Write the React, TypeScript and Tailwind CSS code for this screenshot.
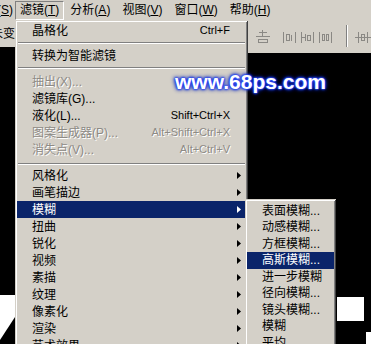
import { Fragment } from 'react';

type Entry =
  | { sep: string }
  | { label: string; shortcut?: string; sub?: boolean; disabled?: boolean; active?: boolean };

const mainItems: Entry[] = [
  { label: '晶格化', shortcut: 'Ctrl+F' },
  { sep: 'h-[8px] pt-[3px]' },
  { label: '转换为智能滤镜' },
  { sep: 'h-[9px] pt-[3px]' },
  { label: '抽出(X)...', disabled: true },
  { label: '滤镜库(G)...' },
  { label: '液化(L)...', shortcut: 'Shift+Ctrl+X' },
  { label: '图案生成器(P)...', shortcut: 'Alt+Shift+Ctrl+X', disabled: true },
  { label: '消失点(V)...', shortcut: 'Alt+Ctrl+V', disabled: true },
  { sep: 'h-[9px] pt-[5px]' },
  { label: '风格化', sub: true },
  { label: '画笔描边', sub: true },
  { label: '模糊', sub: true, active: true },
  { label: '扭曲', sub: true },
  { label: '锐化', sub: true },
  { label: '视频', sub: true },
  { label: '素描', sub: true },
  { label: '纹理', sub: true },
  { label: '像素化', sub: true },
  { label: '渲染', sub: true },
  { label: '艺术效果', sub: true },
];

const blurItems = [
  { label: '表面模糊...' },
  { label: '动感模糊...' },
  { label: '方框模糊...' },
  { label: '高斯模糊...', active: true },
  { label: '进一步模糊' },
  { label: '径向模糊...' },
  { label: '镜头模糊...' },
  { label: '模糊' },
  { label: '平均' },
];

const menuFrame =
  'bg-[#d4d0c8] p-[2px] shadow-[inset_1px_1px_0_#d4d0c8,inset_-1px_-1px_0_#404040,inset_2px_2px_0_#ffffff,inset_-2px_-2px_0_#808080]';

const disabledText = 'text-[#8d8a85] [text-shadow:1px_1px_0_#ffffff]';

function Arrow({ white }: { white?: boolean }) {
  return (
    <svg width="4" height="7" viewBox="0 0 4 7">
      <polygon points="0,0 4,3.5 0,7" fill={white ? '#ffffff' : '#000000'} />
    </svg>
  );
}

function MenuBarItem({ name, u }: { name: string; u: string }) {
  return (
    <div className="px-[6px] whitespace-nowrap">
      {name}(<span className="underline">{u}</span>)
    </div>
  );
}

function MainMenu() {
  return (
    <div className={`absolute left-[15px] top-[20px] w-[233px] h-[340px] ${menuFrame}`}>
      {mainItems.map((it, i) => {
        if ('sep' in it) {
          return (
            <div key={i} className={it.sep}>
              <div className="mx-[1px] border-t border-t-[#808080] border-b border-b-white" />
            </div>
          );
        }
        return (
          <div
            key={i}
            className={`flex items-center h-[17px] pl-[15px] pr-[4px] whitespace-nowrap ${
              it.active ? 'bg-[#0a246a] text-white' : it.disabled ? disabledText : 'text-black'
            }`}
          >
            <span className="text-[12px]">{it.label}</span>
            <span className="flex-1" />
            {it.shortcut && <span className="text-[11px] mr-[7px]">{it.shortcut}</span>}
            <span className="w-[5px] flex items-center">{it.sub && <Arrow white={it.active} />}</span>
          </div>
        );
      })}
    </div>
  );
}

function BlurMenu() {
  return (
    <div className={`absolute left-[245px] top-[199px] w-[91px] h-[160px] pt-[3.5px] ${menuFrame}`}>
      {blurItems.map((it) => (
        <div
          key={it.label}
          className={`flex items-center h-[16.5px] pl-[15px] text-[12px] whitespace-nowrap ${
            it.active ? 'bg-[#0a246a] text-white' : 'text-black'
          }`}
        >
          {it.label}
        </div>
      ))}
    </div>
  );
}

function ToolIcons() {
  const c = '#8a8884';
  return (
    <svg width="123" height="33" viewBox="0 0 123 33" shapeRendering="crispEdges">
      {/* align icon, mostly under the menu edge */}
      <line x1="11" y1="12.5" x2="19" y2="12.5" stroke={c} />
      <line x1="8" y1="16.5" x2="22" y2="16.5" stroke={c} />
      <rect x="10.5" y="19.5" width="9" height="3" fill="none" stroke={c} />
      <line x1="14.5" y1="10" x2="14.5" y2="16" stroke={c} />
      {/* distribute icons */}
      {[35, 53, 71].map((x, k) => (
        <Fragment key={x}>
          <line x1={x + 0.5} y1="12" x2={x + 0.5} y2="23" stroke={c} />
          <line x1={x + 12.5} y1="12" x2={x + 12.5} y2="23" stroke={c} />
          {k === 0 ? (
            <>
              <rect x={x + 3.5} y="14.5" width="3" height="6" fill="none" stroke={c} />
              <line x1={x + 8.5} y1="15" x2={x + 8.5} y2="21" stroke={c} />
            </>
          ) : k === 1 ? (
            <>
              <line x1={x + 4.5} y1="14" x2={x + 4.5} y2="21" stroke={c} />
              <rect x={x + 6.5} y="15.5" width="3" height="5" fill="none" stroke={c} />
              <line x1={x} y1="17.5" x2={x + 4} y2="17.5" stroke={c} />
            </>
          ) : (
            <>
              <rect x={x + 3.5} y="14.5" width="2" height="6" fill="none" stroke={c} />
              <rect x={x + 7.5} y="14.5" width="2" height="6" fill="none" stroke={c} />
            </>
          )}
        </Fragment>
      ))}
      {/* separator */}
      <line x1="98.5" y1="5" x2="98.5" y2="27" stroke="#808080" />
      <line x1="99.5" y1="5" x2="99.5" y2="27" stroke="#ffffff" />
      {/* partial icon */}
      <line x1="110.5" y1="12" x2="110.5" y2="23" stroke={c} />
      <rect x="113.5" y="14.5" width="3" height="6" fill="none" stroke={c} />
      <line x1="119.5" y1="12" x2="119.5" y2="23" stroke={c} />
      <line x1="107" y1="17.5" x2="123" y2="17.5" stroke={c} />
    </svg>
  );
}

export default function App() {
  return (
    <div className="relative w-[371px] h-[344px] overflow-hidden bg-black flex flex-col font-['Liberation_Sans','Noto_Sans_CJK_SC',sans-serif]">
      {/* 菜单栏 */}
      <div className="h-[20px] bg-[#d4d0c8] flex items-center text-[12px] text-black">
        <div className="w-[13px] overflow-hidden flex justify-end whitespace-nowrap">
          (<span className="underline">S</span>)
        </div>
        <div className="ml-[2px] h-[19px] flex items-center px-[4px] border border-t-[#808080] border-l-[#808080] border-b-white border-r-white whitespace-nowrap">
          滤镜(<span className="underline">T</span>)
        </div>
        <MenuBarItem name="分析" u="A" />
        <MenuBarItem name="视图" u="V" />
        <MenuBarItem name="窗口" u="W" />
        <MenuBarItem name="帮助" u="H" />
      </div>

      {/* 选项栏 */}
      <div className="flex items-start">
        <div className="w-[15px] h-[27px] bg-[#d4d0c8] overflow-hidden flex items-center justify-end text-[12px] text-black whitespace-nowrap">
          未变
        </div>
        <div className="flex-1" />
        <div className="w-[123px] h-[33px] bg-[#d4d0c8]">
          <ToolIcons />
        </div>
      </div>

      {/* 画布 */}
      <div className="relative flex-1">
        <svg className="absolute left-0 top-[242px]" width="15" height="50" viewBox="0 0 15 50">
          <polygon points="0,0 15,0 15,22 0,45" fill="#ffffff" />
        </svg>
        <svg className="absolute left-[336px] top-[244px]" width="35" height="47" viewBox="0 0 35 47">
          <rect x="1" y="0" width="27" height="24" fill="#ffffff" />
          <rect x="30" y="35" width="5" height="12" fill="#ffffff" />
        </svg>
      </div>

      <MainMenu />
      <BlurMenu />

      {/* 水印，盖在菜单之上 */}
      <div className="absolute left-[175px] top-[71px] z-10 text-[21px] leading-[21px] font-bold text-white font-['Liberation_Sans',sans-serif] [text-shadow:0_0_1px_#2a48ff,0_0_2px_#2a48ff,0_0_2px_#2a48ff,0_0_3px_#1f3de8,0_0_4px_#1430c8,0_0_5px_#0c2299]">
        www.68ps.com
      </div>
    </div>
  );
}
